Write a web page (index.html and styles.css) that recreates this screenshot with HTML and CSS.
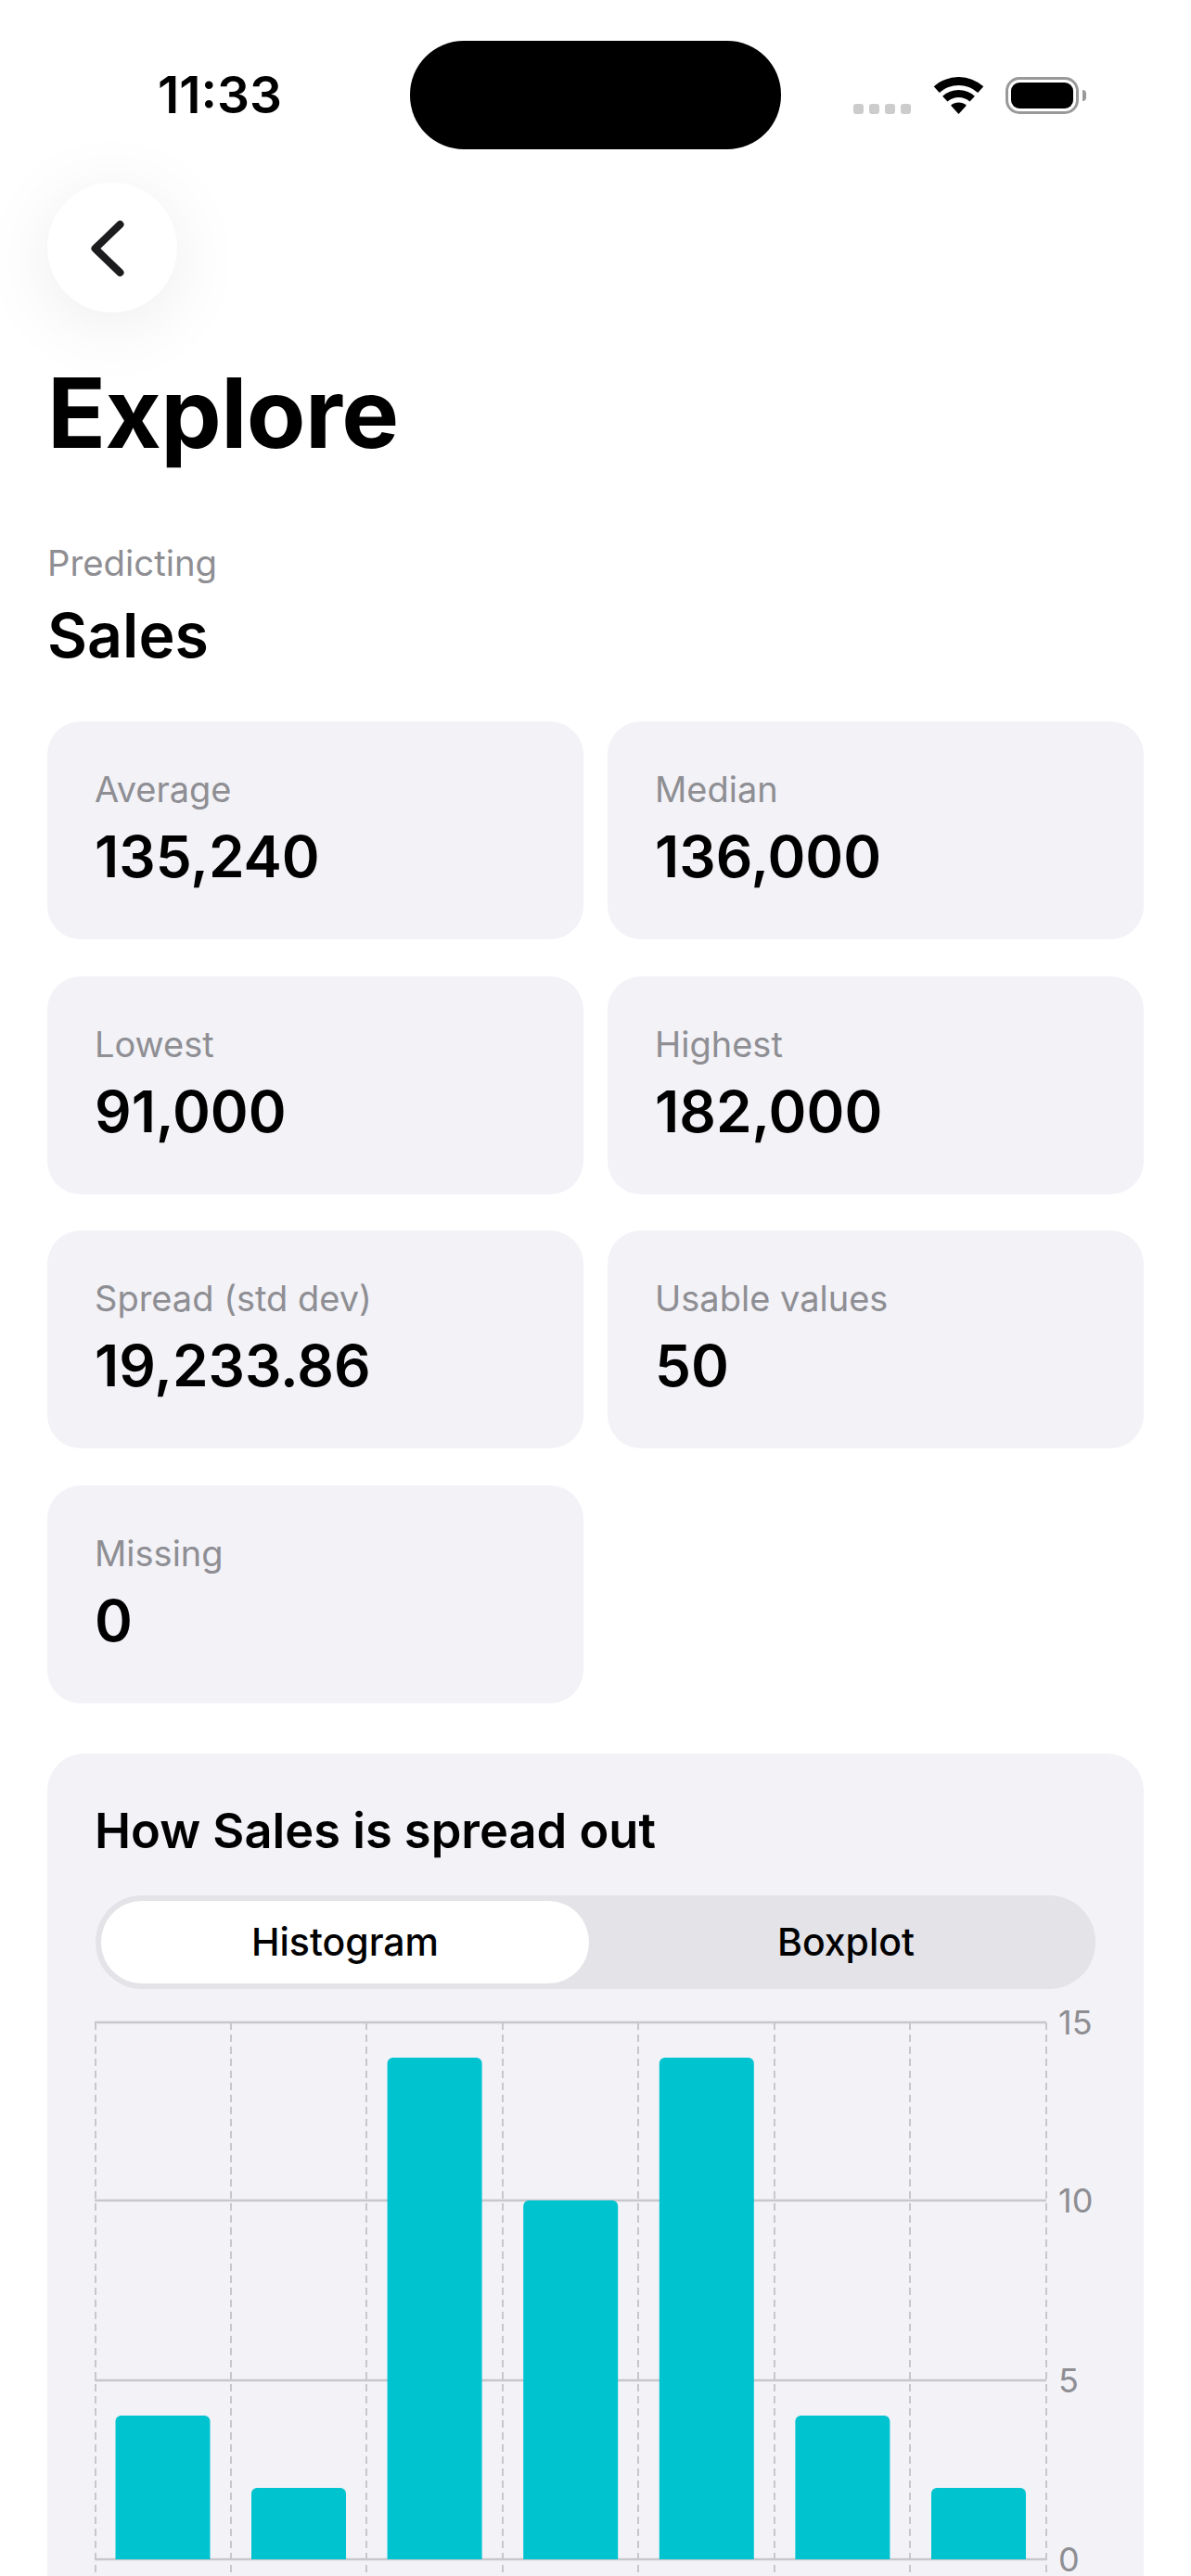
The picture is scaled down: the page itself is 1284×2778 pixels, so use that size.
FILE: index.html
```html
<!DOCTYPE html>
<html lang="en">
<head>
  <meta charset="UTF-8" />
  <meta name="viewport" content="width=device-width, initial-scale=1.0" />
  <title>Explore</title>
  <link rel="stylesheet" href="styles.css">
</head>
<body>
  <div class="status-bar">
    <span class="time">11:33</span>
    <div class="island"></div>
    <div class="status-icons">
      <div class="signal"><i></i><i></i><i></i><i></i></div>
      <svg class="wifi" width="55" height="40" viewBox="-1 0 55 40">
        <path d="M-.3 10.3A40 40 0 0 1 53.3 10.3L47.2 17A31 31 0 0 0 5.8 17Z" />
        <path d="M9.1 20.7A26 26 0 0 1 43.9 20.7L38.5 26.6A18 18 0 0 0 14.5 26.6Z" />
        <path d="M18.1 30.7A12.5 12.5 0 0 1 34.9 30.7L26.5 40Z" />
      </svg>
      <div class="battery"><div class="battery-level"></div></div>
      <div class="battery-cap"></div>
    </div>
  </div>

  <main class="page">
    <button class="back" type="button" aria-label="Back">
      <svg width="40" height="64" viewBox="0 0 40 64">
        <path d="M31.5 7L4.5 33L31.5 59" fill="none" stroke="#1c1c1e" stroke-width="8" stroke-linecap="round" stroke-linejoin="round" />
      </svg>
    </button>

    <h1>Explore</h1>

    <p class="predicting">Predicting</p>
    <h2 class="target">Sales</h2>

    <div class="stats">
      <div class="stat"><div class="stat-label">Average</div><div class="stat-value">135,240</div></div>
      <div class="stat"><div class="stat-label">Median</div><div class="stat-value">136,000</div></div>
      <div class="stat"><div class="stat-label">Lowest</div><div class="stat-value">91,000</div></div>
      <div class="stat"><div class="stat-label">Highest</div><div class="stat-value">182,000</div></div>
      <div class="stat"><div class="stat-label">Spread (std dev)</div><div class="stat-value">19,233.86</div></div>
      <div class="stat"><div class="stat-label">Usable values</div><div class="stat-value">50</div></div>
      <div class="stat"><div class="stat-label">Missing</div><div class="stat-value">0</div></div>
    </div>

    <section class="chart-card">
      <h3>How Sales is spread out</h3>

      <div class="segments">
        <button class="segment active" type="button">Histogram</button>
        <button class="segment" type="button">Boxplot</button>
      </div>

      <svg class="chart" width="1080" height="608" viewBox="0 0 1080 608">
        <g class="grid-h">
          <line x1="0" x2="1026" y1="10" y2="10" />
          <line x1="0" x2="1026" y1="202" y2="202" />
          <line x1="0" x2="1026" y1="396" y2="396" />
          <line x1="0" x2="1026" y1="589" y2="589" />
        </g>
        <g class="grid-v">
          <line x1="1" x2="1" y1="10" y2="608" />
          <line x1="147" x2="147" y1="10" y2="608" />
          <line x1="293" x2="293" y1="10" y2="608" />
          <line x1="440" x2="440" y1="10" y2="608" />
          <line x1="586" x2="586" y1="10" y2="608" />
          <line x1="733" x2="733" y1="10" y2="608" />
          <line x1="879" x2="879" y1="10" y2="608" />
          <line x1="1026" x2="1026" y1="10" y2="608" />
        </g>
        <g class="bars">
          <path d="M22.5 440a6 6 0 0 1 6-6h90a6 6 0 0 1 6 6V589H22.5Z" />
          <path d="M169 518a6 6 0 0 1 6-6h90a6 6 0 0 1 6 6V589H169Z" />
          <path d="M315.6 54a6 6 0 0 1 6-6h90a6 6 0 0 1 6 6V589H315.6Z" />
          <path d="M462.2 208a6 6 0 0 1 6-6h90a6 6 0 0 1 6 6V589H462.2Z" />
          <path d="M608.8 54a6 6 0 0 1 6-6h90a6 6 0 0 1 6 6V589H608.8Z" />
          <path d="M755.4 440a6 6 0 0 1 6-6h90a6 6 0 0 1 6 6V589H755.4Z" />
          <path d="M902 518a6 6 0 0 1 6-6h90a6 6 0 0 1 6 6V589H902Z" />
        </g>
        <g class="axis-labels">
          <text x="1039" y="23">15</text>
          <text x="1039" y="215">10</text>
          <text x="1039" y="409">5</text>
          <text x="1039" y="602">0</text>
        </g>
      </svg>
    </section>
  </main>
</body>
</html>
```

FILE: styles.css
```css
:root {
  --card-bg: #f2f2f7;
  --muted: #8e8e93;
  --grid: #c7c7cc;
  --bar: #00c3d0;
}

* {
  box-sizing: border-box;
  font-family: 'Inter', 'Liberation Sans', sans-serif;
}

body {
  margin: 0;
  height: 2778px;
  overflow: hidden;
  background: #fff;
  color: #000;
}

/* status bar */
.status-bar {
  display: grid;
  grid-template-columns: 1fr 400px 1fr;
  align-items: center;
  height: 161px;
  padding-top: 44px;
}

.time {
  padding-left: 170px;
  font-size: 55px;
  font-weight: 600;
  line-height: 117px;
}

.island {
  height: 117px;
  border-radius: 58px;
  background: #000;
}

.status-icons {
  display: flex;
  align-items: flex-start;
  justify-content: flex-end;
  height: 40px;
  padding-right: 113px;
}

.signal {
  display: flex;
  gap: 6px;
  margin: 29px 24px 0 0;
}

.signal i {
  width: 11px;
  height: 11px;
  border-radius: 3px;
  background: #ccc;
}

.wifi {
  margin-right: 23px;
  fill: #000;
}

.battery {
  width: 79px;
  height: 40px;
  padding: 3px;
  border: 3px solid #999;
  border-radius: 15px;
}

.battery-level {
  height: 100%;
  border-radius: 9px;
  background: #000;
}

.battery-cap {
  width: 4px;
  height: 12px;
  margin: 14px 0 0 4px;
  border-radius: 0 4px 4px 0;
  background: #999;
}

/* page */
.page {
  padding: 36px 51px 0;
}

.back {
  display: flex;
  align-items: center;
  justify-content: center;
  width: 140px;
  height: 140px;
  padding: 0 6px 0 0;
  border: none;
  border-radius: 50%;
  background: #fff;
  box-shadow: 0 12px 80px rgba(0, 0, 0, 0.08);
}

h1 {
  margin: 48px 0 0;
  font-size: 104px;
  font-weight: 700;
  line-height: 120px;
  letter-spacing: -0.6px;
}

.predicting {
  margin: 79px 0 0;
  font-size: 38.3px;
  line-height: 46px;
  color: var(--muted);
}

.target {
  margin: 17px 0 0;
  font-size: 66.2px;
  font-weight: 600;
  line-height: 76px;
}

.stats {
  display: grid;
  grid-template-columns: 1fr 1fr;
  gap: 39.5px 26px;
  margin-top: 55px;
}

.stat {
  height: 235px;
  padding: 51px 51px 0;
  border-radius: 36px;
  background: var(--card-bg);
}

.stat-label {
  font-size: 38px;
  line-height: 44px;
  color: var(--muted);
}

.stat-value {
  margin-top: 16px;
  font-size: 62px;
  font-weight: 600;
  line-height: 70px;
}

/* chart card */
.chart-card {
  margin-top: 54px;
  padding: 53px 52px 60px 51px;
  border-radius: 40px;
  background: var(--card-bg);
}

h3 {
  margin: 0;
  font-size: 52.4px;
  font-weight: 600;
  line-height: 60px;
}

.segments {
  display: flex;
  gap: 14px;
  height: 101px;
  margin: 40px 0 0 1px;
  padding: 6px;
  border-radius: 50px;
  background: #e3e3e8;
}

.segment {
  flex: 1;
  border: none;
  border-radius: 44px;
  background: none;
  font-size: 41px;
  font-weight: 500;
  color: #000;
}

.segment.active {
  background: #fff;
}

.chart {
  display: block;
  margin: 26px 0 0;
  overflow: visible;
}

.grid-h line {
  stroke: var(--grid);
  stroke-width: 2.5;
}

.grid-v line {
  stroke: var(--grid);
  stroke-width: 2;
  stroke-dasharray: 8 5;
}

.bars path {
  fill: var(--bar);
}

.axis-labels text {
  font-size: 36px;
  fill: var(--muted);
}
```
